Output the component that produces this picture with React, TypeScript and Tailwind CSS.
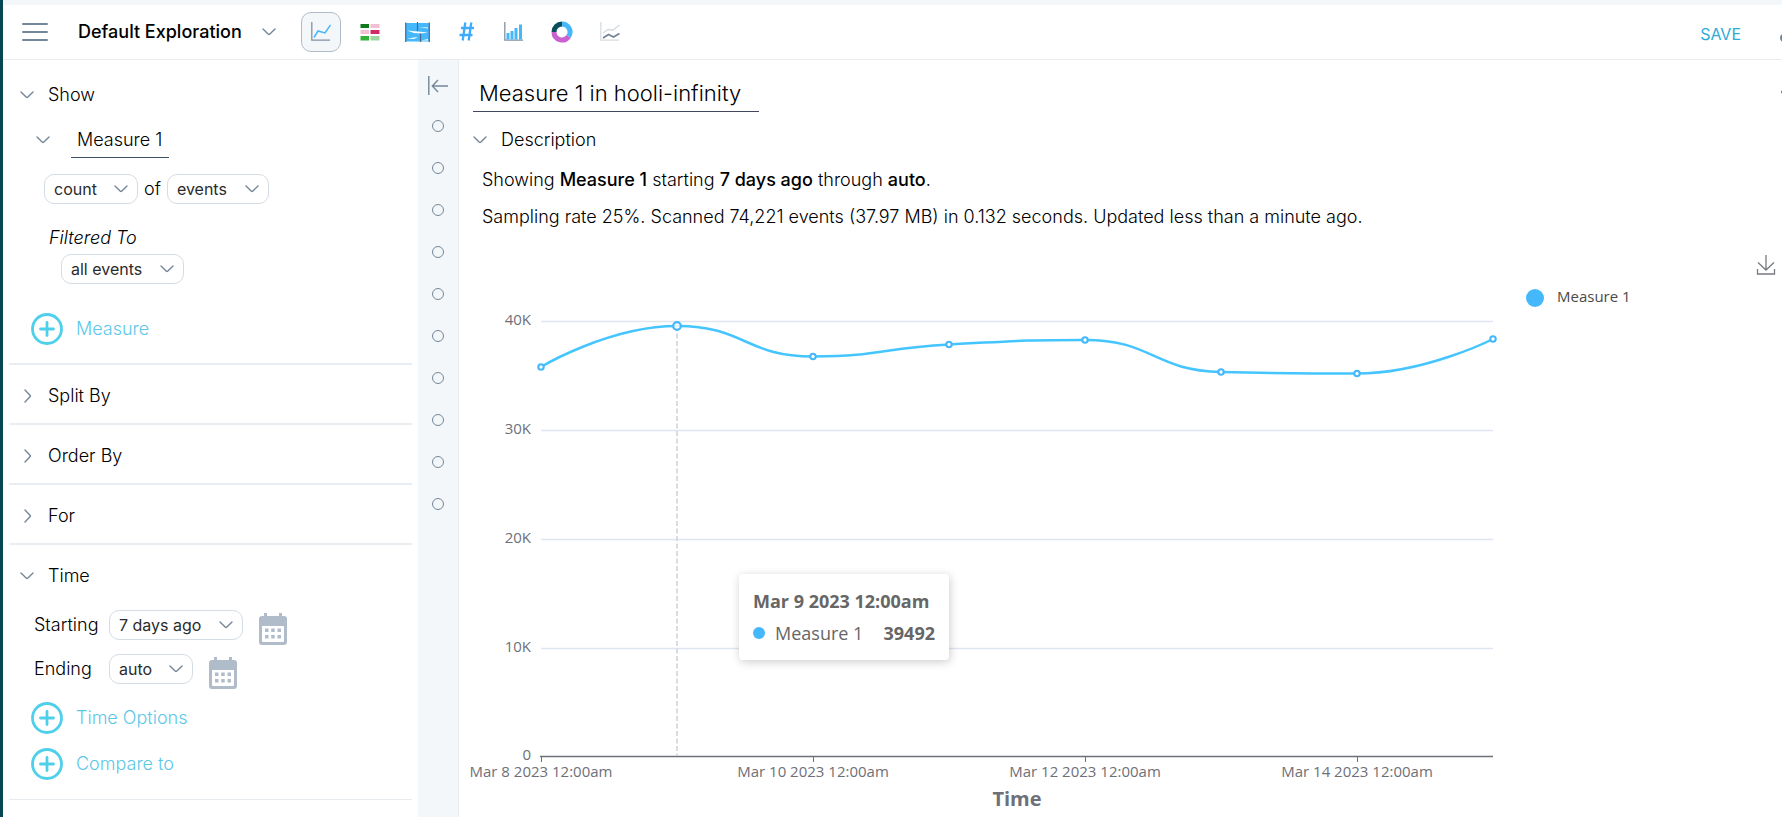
import React from "react";

type IconProps = { className?: string };

function Chevron({ className = "" }: IconProps) {
  return (
    <svg viewBox="0 0 14 8" className={`h-2 w-[14px] shrink-0 ${className}`} fill="none" stroke="#74869a" strokeWidth="1.4" strokeLinecap="round" strokeLinejoin="round" aria-hidden="true">
      <path d="M1 1 6.4 6.2Q7 6.7 7.6 6.2L13 1" />
    </svg>
  );
}

function Pill({ label, value, width }: { label: string; value: string; width: string }) {
  return (
    <span className={`relative flex h-[30px] shrink-0 items-center ${width}`}>
      <select
        aria-label={label}
        defaultValue={value}
        className="h-full w-full appearance-none rounded-[10px] border border-[#d5dce4] bg-white pl-[9px] pr-9 text-base font-normal text-[#2b2b2b]"
      >
        <option>{value}</option>
      </select>
      <Chevron className="pointer-events-none absolute right-[10px]" />
    </span>
  );
}

function AddButton({ children }: { children: string }) {
  return (
    <button className="flex h-8 items-center gap-[13px] text-lg text-[#5cc8e8]">
      <svg viewBox="0 0 32 32" className="size-8" fill="none" stroke="#4fd0ea" strokeWidth="2.8" strokeLinecap="round" aria-hidden="true">
        <circle cx="16" cy="16" r="14.5" />
        <path d="M16 9.5v13M9.5 16h13" />
      </svg>
      {children}
    </button>
  );
}

function CalendarButton({ label }: { label: string }) {
  return (
    <button aria-label={label} className="mt-2 ml-4">
      <svg viewBox="0 0 28 32" className="h-8 w-7" fill="#b0bcc9" aria-hidden="true">
        <path fillRule="evenodd" d="M5 0h3v3h12V0h3v3h2a3 3 0 0 1 3 3v23a3 3 0 0 1-3 3H3a3 3 0 0 1-3-3V6a3 3 0 0 1 3-3h2ZM3 13v15a1 1 0 0 0 1 1h20a1 1 0 0 0 1-1V13Z" />
        <path d="M6 15.500h3.500V19H6zM12.200 15.500h3.500V19h-3.500zM18.500 15.500H22V19h-3.500zM6 22h3.500v3.500H6zM12.200 22h3.500v3.500h-3.500zM18.500 22H22v3.500h-3.500z" />
      </svg>
    </button>
  );
}

function Section({ children }: { children: string }) {
  return (
    <button className="flex h-[60px] w-full items-center gap-[13px] border-b-2 border-[#e9eef2] pt-1 pl-3 text-left text-lg">
      <Chevron className="-rotate-90" />
      {children}
    </button>
  );
}

const axisIcon = "M.8 0v18.200H19";

const chartTypes: { name: string; icon: React.ReactNode }[] = [
  {
    name: "Line chart",
    icon: (
      <svg viewBox="0 0 20 20" className="size-5" fill="none">
        <path d={axisIcon} stroke="#8391a2" strokeWidth="1.3" />
        <path d="M3 15.500 7 9l7 2 5.500-8" stroke="#45b8fb" strokeWidth="1.500" />
      </svg>
    ),
  },
  {
    name: "Heatmap",
    icon: (
      <svg viewBox="0 0 20 18" className="h-[18px] w-5">
        <path fill="#0f7a1c" d="M.5 1H9v4H.5z" />
        <path fill="#f3bfd2" d="M10.500 1h9v4h-9zM.5 7H9v4H.5z" />
        <path fill="#d22c68" d="M10.500 7h9v4h-9z" />
        <path fill="#31b138" d="M.5 13H9v4.500H.5z" />
        <path fill="#9dd8a0" d="M10.500 13h9v4.500h-9z" />
      </svg>
    ),
  },
  {
    name: "Flow chart",
    icon: (
      <svg viewBox="0 0 25 20" className="h-5 w-[25px]">
        <path fill="#45b8fb" d="M1 1h23v18.500H1z" />
        <path fill="#fff" d="M2 8.500 12.500 9.500 23 10.500 16 11.500 9 11ZM14 5l9 1.500v-1ZM2 16.500l11-1.500-4 2ZM16 18.500 23 17v1.500Z" />
        <path stroke="#4b6789" strokeWidth="1.200" d="M.7 .5v19.500M24.300 .5v19.500M12.500 0v9M15.500 11.500v8.500" />
      </svg>
    ),
  },
  {
    name: "Number",
    icon: (
      <svg viewBox="0 0 16 20" className="h-5 w-4" fill="none" stroke="#3fabfb" strokeWidth="2.300">
        <path d="M7.300 .5 4.700 18.500M13.300 .5 10.700 18.500M3 6h13M1.500 13H14.500" />
      </svg>
    ),
  },
  {
    name: "Bar chart",
    icon: (
      <svg viewBox="0 0 20 20" className="size-5" fill="none">
        <path d={axisIcon} stroke="#8391a2" strokeWidth="1.3" />
        <path fill="#45b8fb" d="M2.500 11h3v6.500h-3zM6.500 9h3v8.500h-3zM10.500 6h3v11.500h-3zM15 2.500h3v15h-3z" />
      </svg>
    ),
  },
  {
    name: "Pie chart",
    icon: (
      <svg viewBox="0 0 22 22" className="size-[22px]" fill="none" strokeWidth="5">
        <path stroke="#45b8fb" d="M11 3a8 8 0 0 1 6.600 12.500" />
        <path stroke="#c961ce" d="M17.600 15.500A8 8 0 0 1 3 11" />
        <path stroke="#0b4f5e" d="M3 11a8 8 0 0 1 8-8" />
      </svg>
    ),
  },
  {
    name: "Stacked graph",
    icon: (
      <svg viewBox="0 0 20 20" className="size-5" fill="none">
        <path d={axisIcon} stroke="#d5dbe2" strokeWidth="1.200" />
        <path d="m3 11 5-3.500 5 .5 6.500-5" stroke="#d5dbe2" strokeWidth="1.300" />
        <path d="m3 16 5.500-3.500 5 2.500 6-3.500" stroke="#718296" strokeWidth="1.600" />
      </svg>
    ),
  },
];

const gridLines = [
  { y: 77, label: "40K" },
  { y: 186, label: "30K" },
  { y: 295, label: "20K" },
  { y: 404, label: "10K" },
];

const points = [
  { x: 82, y: 123 },
  { x: 218, y: 82, active: true },
  { x: 354, y: 112.5 },
  { x: 490, y: 100.5 },
  { x: 626, y: 96 },
  { x: 762, y: 128 },
  { x: 898, y: 129.5 },
  { x: 1034, y: 95 },
];

const ticks = [
  { x: 82, label: "Mar 8 2023 12:00am" },
  { x: 354, label: "Mar 10 2023 12:00am" },
  { x: 626, label: "Mar 12 2023 12:00am" },
  { x: 898, label: "Mar 14 2023 12:00am" },
];

const curve =
  "M82 123C82 123 150 82 218 82S286 112.500 354 112.500 422 104 490 100.500 558 96 626 96 694 126.500 762 128 830 129.500 898 129.500 1034 95 1034 95";

function Chart() {
  return (
    <div className="relative mt-[13px] font-['Open_Sans','Noto_Sans',sans-serif] font-normal">
      <svg viewBox="0 0 1323 573" className="block h-auto w-full" role="img" aria-label="Measure 1 over time">
        <g fontSize="15" fill="#6e7079">
          {gridLines.map((line) => (
            <g key={line.label}>
              <path d={`M82 ${line.y + 0.5}H1034`} stroke="#e0e6f1" strokeWidth="1.300" />
              <text x="72" y={line.y + 4} textAnchor="end">{line.label}</text>
            </g>
          ))}
          <text x="72" y="516" textAnchor="end">0</text>
          <path d="M81 512.500h953" stroke="#6e7079" strokeWidth="1.300" />
          {ticks.map((tick) => (
            <g key={tick.label}>
              <path d={`M${tick.x + 0.5} 512v6`} stroke="#6e7079" />
              <text x={tick.x} y="533" textAnchor="middle">{tick.label}</text>
            </g>
          ))}
        </g>
        <text x="558" y="562" textAnchor="middle" fontSize="20" fontWeight="700" fill="#6e7079">Time</text>
        <path d={curve} fill="none" stroke="#45c5ff" strokeWidth="2.500" />
        <path d="M218 82v430" stroke="#ced1db" strokeWidth="1.500" strokeDasharray="5 2.500" />
        {points.map((p) => (
          <circle key={p.x} cx={p.x} cy={p.y} r={p.active ? 3.8 : 2.7} fill="#fff" fillOpacity={p.active ? 0.8 : 1} stroke="#45b8fb" strokeWidth={p.active ? 2.2 : 2.1} />
        ))}
        <circle cx="1076" cy="54" r="9" fill="#45b8fb" />
        <text x="1098" y="58" fontSize="15" fill="#4a4a4a">Measure 1</text>
        <g fill="none" stroke="#777a80" strokeWidth="1.300">
          <path d="M1307 11v15M1299 18.500l8 7.500 8-7.500M1298.500 25v5h17v-5" />
        </g>
      </svg>
      <div role="tooltip" className="absolute top-[330px] left-[280px] flex h-[86px] w-[210px] flex-col justify-center gap-1 rounded bg-white px-[14px] text-lg leading-7 text-[#666] shadow-[1px_2px_10px_rgba(0,0,0,0.2)]">
        <strong className="font-bold whitespace-nowrap">Mar 9 2023 12:00am</strong>
        <span className="flex items-center whitespace-nowrap">
          <i className="mr-[10px] size-3 rounded-full bg-[#45b8fb]" />
          Measure 1
          <strong className="ml-auto font-bold">39492</strong>
        </span>
      </div>
    </div>
  );
}

export default function App() {
  return (
    <div className="flex h-screen overflow-hidden border-l-[3px] border-[#054653] bg-white font-['Inter',sans-serif] font-light text-black">
      <div className="flex min-w-0 flex-1 flex-col border-t-[5px] border-[#f3f7fa]">
        <header className="flex h-[55px] shrink-0 items-center border-b border-[#e6ecf0]">
          <button aria-label="Menu" className="ml-[19px] flex w-[26px] flex-col gap-[6px]">
            <span className="h-[2px] rounded bg-[#74869a]" />
            <span className="h-[2px] rounded bg-[#74869a]" />
            <span className="h-[2px] rounded bg-[#74869a]" />
          </button>
          <button className="ml-[30px] flex items-center gap-5 text-lg font-medium">
            Default Exploration
            <Chevron />
          </button>
          <nav aria-label="Visualization" className="ml-[25px] flex gap-2">
            {chartTypes.map((type, index) => (
              <button
                key={type.name}
                aria-label={type.name}
                className={`flex size-10 items-center justify-center rounded-[10px] ${index === 0 ? "border border-[#b0bcc9] bg-[#f3f7fa]" : "pl-[2px]"}`}
              >
                {type.icon}
              </button>
            ))}
          </nav>
          <button className="ml-auto pt-1 text-base font-normal text-[#2bacd6]">SAVE</button>
          <button aria-label="More" className="ml-[39px] w-[2px] overflow-hidden">
            <span className="mt-[11px] block size-2 rounded-full bg-[#74869a]" />
          </button>
        </header>

        <div className="flex min-h-0 flex-1">
          <aside className="w-[415px] shrink-0 overflow-hidden px-[6px]">
            <div className="h-[305px] border-b-2 border-[#e9eef2] pt-[21px]">
              <button className="flex h-7 items-center gap-[14px] pl-[11px] text-lg">
                <Chevron />
                Show
              </button>
              <div className="mt-[13px] flex h-9 items-center gap-[21px] pl-[27px]">
                <Chevron />
                <input aria-label="Measure name" defaultValue="Measure 1" className="h-9 w-[98px] border-b border-[#3c5368] bg-transparent px-[6px] text-lg font-light" />
              </div>
              <div className="mt-4 flex h-[30px] items-center gap-[6px] pl-[35px] text-lg">
                <Pill label="Aggregation" value="count" width="w-[94px]" />
                of
                <Pill label="Source" value="events" width="w-[102px]" />
              </div>
              <div className="mt-5 pl-10 text-lg leading-7 italic">Filtered To</div>
              <div className="mt-[2px] pl-[52px]">
                <Pill label="Filter" value="all events" width="w-[123px]" />
              </div>
              <div className="mt-[29px] pl-[22px]">
                <AddButton>Measure</AddButton>
              </div>
            </div>
            <Section>Split By</Section>
            <Section>Order By</Section>
            <Section>For</Section>
            <div className="h-[255px] border-b border-[#e6ecf0] pt-[17px]">
              <button className="flex h-7 items-center gap-[14px] pl-[11px] text-lg">
                <Chevron />
                Time
              </button>
              <div className="mt-[13px] flex h-11 items-center pl-[25px] text-lg">
                <span className="w-[75px]">Starting</span>
                <Pill label="Starting" value="7 days ago" width="w-[134px]" />
                <CalendarButton label="Pick starting date" />
              </div>
              <div className="flex h-11 items-center pl-[25px] text-lg">
                <span className="w-[75px]">Ending</span>
                <Pill label="Ending" value="auto" width="w-[84px]" />
                <CalendarButton label="Pick ending date" />
              </div>
              <div className="mt-[11px] flex flex-col gap-[14px] pl-[22px]">
                <AddButton>Time Options</AddButton>
                <AddButton>Compare to</AddButton>
              </div>
            </div>
          </aside>

          <div className="flex w-[41px] shrink-0 flex-col items-center border-r border-[#e6ecf0] bg-[#f3f7fa] pt-4">
            <button aria-label="Collapse panel" className="mb-6">
              <svg viewBox="0 0 20 20" className="size-5" fill="none" stroke="#74869a" strokeWidth="1.400">
                <path d="M.8 0v19M4.500 10H20M10 4l-5.700 6 5.700 6" />
              </svg>
            </button>
            <div className="flex flex-col gap-[30px]">
              {Array.from({ length: 10 }, (_, i) => (
                <button key={i} aria-label={`Step ${i + 1}`} className="size-3 rounded-full border border-[#74869a]" />
              ))}
            </div>
          </div>

          <main className="min-w-0 flex-1 overflow-hidden">
            <div className="flex items-start justify-between">
              <input aria-label="Title" defaultValue="Measure 1 in hooli-infinity" className="mt-3 ml-[14px] h-10 w-[286px] border-b border-[#44485e] bg-transparent px-[6px] pt-[2px] text-[22px] font-light" />
              <button aria-label="Chart options" className="mt-[30px] w-px overflow-hidden">
                <span className="block size-1 rounded-full bg-[#74869a]" />
              </button>
            </div>
            <button className="mt-[14px] flex h-7 items-center gap-[14px] pl-[14px] text-lg">
              <Chevron />
              Description
            </button>
            <p className="mt-3 pl-[23px] text-lg leading-7">
              Showing <strong className="font-medium">Measure 1</strong> starting <strong className="font-medium">7 days ago</strong> through <strong className="font-medium">auto</strong>.
            </p>
            <p className="mt-[9px] pl-[23px] text-lg leading-7">
              Sampling rate 25%. Scanned 74,221 events (37.97 MB) in 0.132 seconds. Updated less than a minute ago.
            </p>
            <Chart />
          </main>
        </div>
      </div>
    </div>
  );
}
